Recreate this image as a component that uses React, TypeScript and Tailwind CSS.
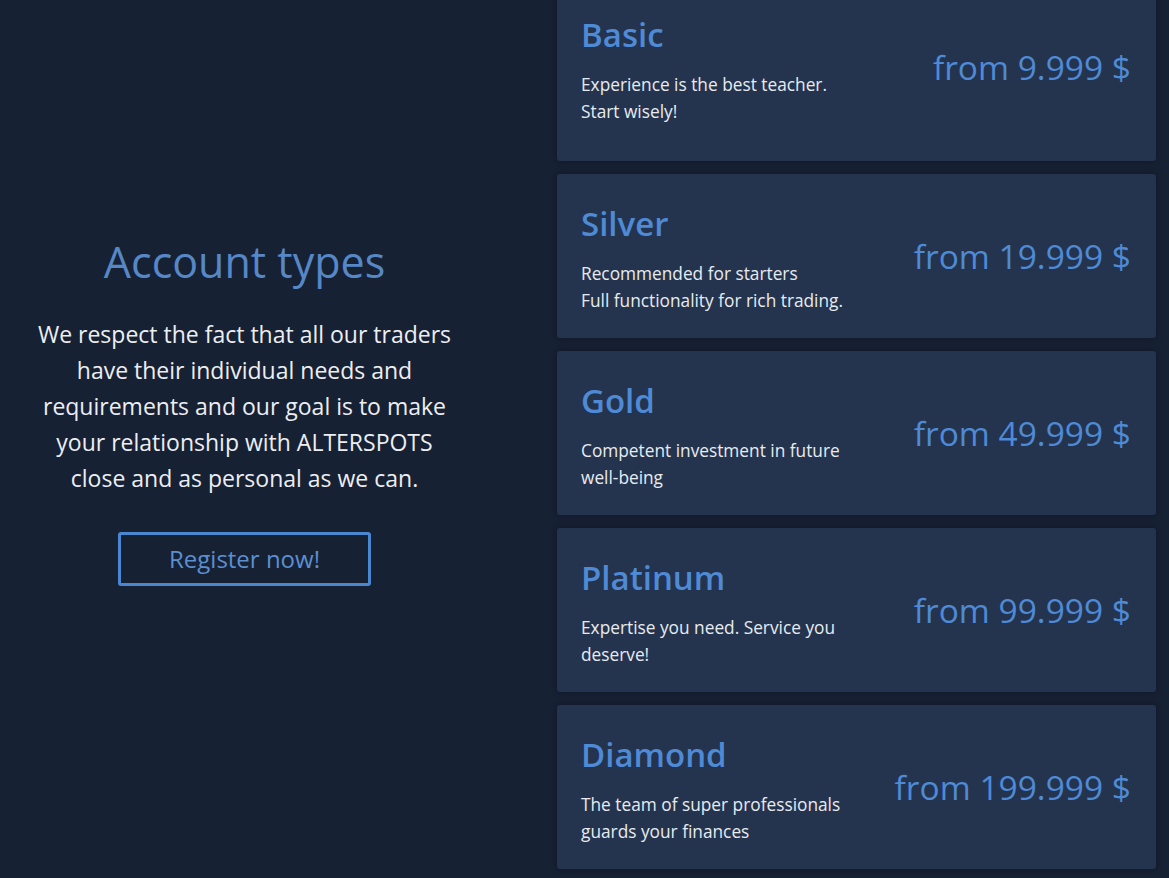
import React from 'react';

type Plan = {
  name: string;
  lines: string[];
  price: string;
};

const plans: Plan[] = [
  { name: 'Basic', lines: ['Experience is the best teacher.', 'Start wisely!'], price: 'from 9.999 $' },
  { name: 'Silver', lines: ['Recommended for starters', 'Full functionality for rich trading.'], price: 'from 19.999 $' },
  { name: 'Gold', lines: ['Competent investment in future', 'well-being'], price: 'from 49.999 $' },
  { name: 'Platinum', lines: ['Expertise you need. Service you', 'deserve!'], price: 'from 99.999 $' },
  { name: 'Diamond', lines: ['The team of super professionals', 'guards your finances'], price: 'from 199.999 $' },
];

const PlanCard: React.FC<{ plan: Plan; first?: boolean }> = ({ plan, first }) => (
  <div
    className={`flex items-start justify-between rounded-[3px] bg-[#24344e] pl-6 pr-[25px] pt-[30px] shadow-[0_0_6px_rgba(5,10,20,0.45)] ${
      first ? 'h-[176px]' : 'h-[164px]'
    }`}
  >
    <div>
      <h3 className="text-[33px] font-semibold leading-[40px] text-[#4e8ad5]">{plan.name}</h3>
      <div className="mt-4 text-[17.3px] leading-[27px] text-[#e8ebf0]">
        {plan.lines.map((l) => (
          <div key={l}>{l}</div>
        ))}
      </div>
    </div>
    <div className="pt-[32px] text-[33.5px] leading-[40px] text-[#4e8ad5]">{plan.price}</div>
  </div>
);

export default function App() {
  return (
    <div
      className="flex h-[878px] w-full overflow-hidden bg-[#172134]"
      style={{ fontFamily: '"Open Sans", "Liberation Sans", sans-serif' }}
    >
      <div className="flex w-[489px] flex-col items-center pt-[234px] text-center">
        <h2 className="text-[43px] leading-[56px] text-[#5687c6]">Account types</h2>
        <p className="mt-[26px] w-[425px] text-[23px] leading-[36px] text-[#eceef2]">
          We respect the fact that all our traders have their individual needs and requirements and our goal is to make
          your relationship with ALTERSPOTS close and as personal as we can.
        </p>
        <button className="mt-[36px] h-[54px] w-[253px] rounded-[3px] border-[3px] border-[#4b86d0] text-[24px] text-[#5b8fd2]">
          Register now!
        </button>
      </div>
      <div className="ml-[68px] mr-[13px] -mt-[15px] flex flex-1 flex-col gap-[13px]">
        {plans.map((p, i) => (
          <PlanCard key={p.name} plan={p} first={i === 0} />
        ))}
      </div>
    </div>
  );
}
